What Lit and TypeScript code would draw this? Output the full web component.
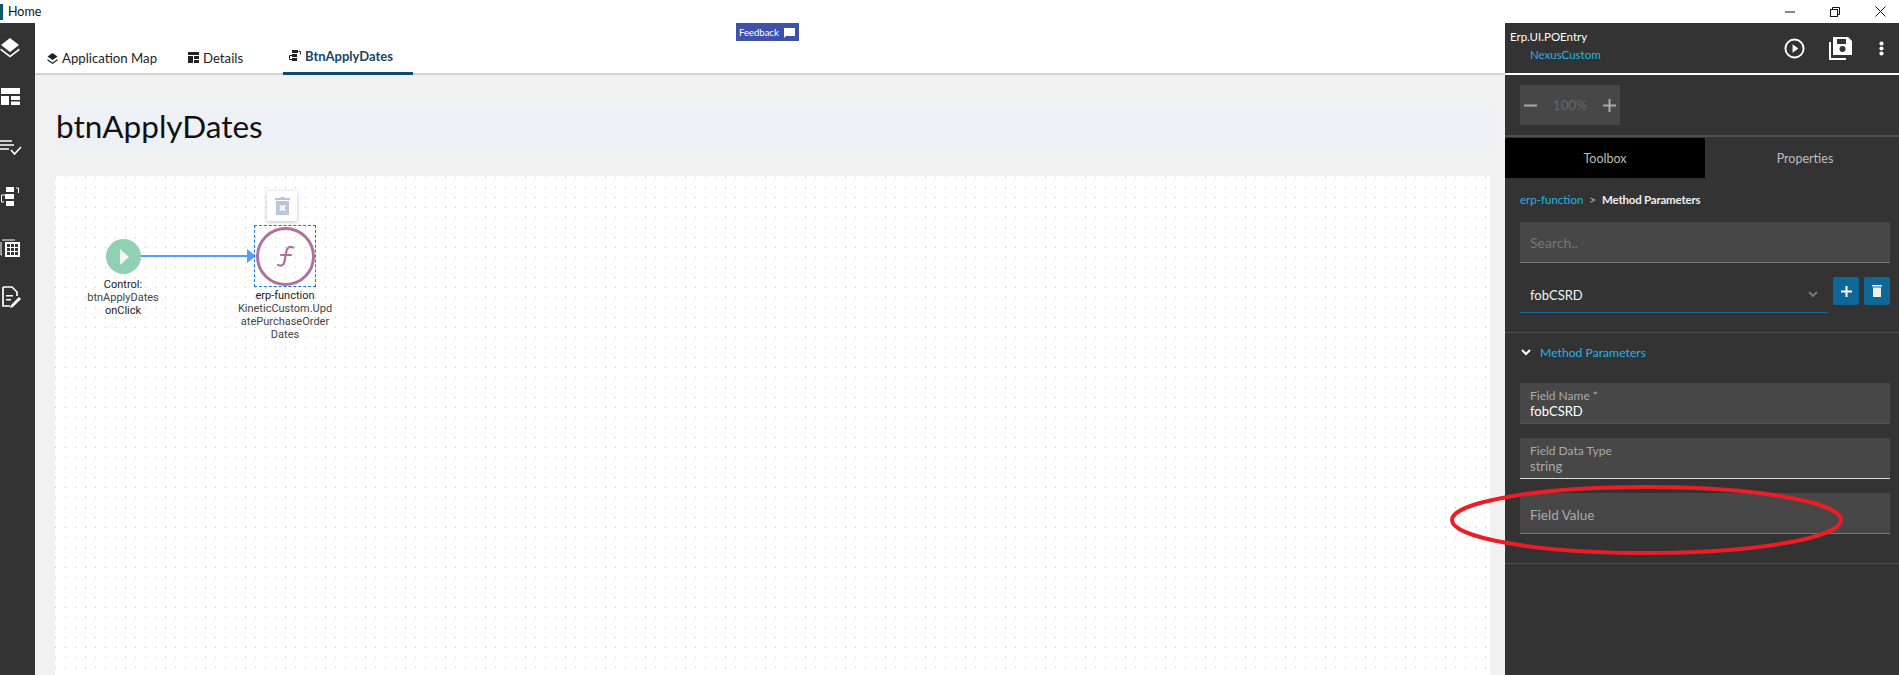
import { LitElement, html, css } from "lit";
import { customElement } from "lit/decorators.js";

@customElement("app-root")
export class AppRoot extends LitElement {
  static styles = css`
    :host { display: block; width: 1899px; height: 675px; overflow: hidden; position: relative; font-family: Lato, "Noto Sans", sans-serif; background: #fff; }
    * { box-sizing: border-box; }
    svg { display: block; }
    .titlebar { height: 23px; display: flex; align-items: center; background: #fff; position: relative; }
    .applogo { width: 3px; height: 16px; background: #0b5a73; }
    .home { margin-left: 5px; font-size: 12.500px; color: #111; }
    .winbtns { margin-left: auto; display: flex; align-items: center; gap: 35px; padding-right: 13px; }
    .body { display: flex; height: 652px; }
    .side { width: 35px; background: #333; display: flex; flex-direction: column; align-items: flex-start; padding-top: 12px; flex: none; }
    .side svg { margin-bottom: 26px; }
    .main { flex: 1; background: #f1f1f1; display: flex; flex-direction: column; min-width: 0; position: relative; }
    .tabs { height: 52px; background: #fff; border-bottom: 2px solid #d2d2d2; display: flex; align-items: flex-end; padding-left: 12px; position: relative; flex: none; }
    .tab { display: flex; align-items: center; gap: 4px; font-size: 13.200px; color: #222; height: 26px; padding-bottom: 5px; flex: none; }
    .tab.t1 { width: 141px; }
    .tab.t2 { width: 95px; }
    .tab.active { width: 130px; margin-bottom: -2px; height: 28px; padding-left: 6px; padding-bottom: 7px; border-bottom: 3px solid #0b4a6f; color: #1b4560; font-weight: 700; gap: 4px; font-size: 13px; }
    .feedback { position: absolute; left: 701px; top: 0; width: 63px; height: 18px; background: #3f51a8; color: #fff; font-size: 9.500px; display: flex; align-items: center; padding-left: 3px; gap: 5px; }
    .heading { margin: 30px 15px 0 20px; height: 48px; background: #edf1f5; font-size: 31.500px; color: #111; line-height: 42px; padding-left: 1px; flex: none; }
    .canvas { margin: 23px 15px 0 20px; flex: 1; background-color: #fff;
      background-image: radial-gradient(circle at 0.5px 0.5px, #c4c4c4 0.7px, transparent 0.8px);
      background-size: 10px 10px; background-position: 0 1px; position: relative; }
    .node-label { position: absolute; width: 110px; text-align: center; font-family: Roboto, sans-serif; font-size: 11px; line-height: 13px; color: #444; white-space: nowrap; }
    .node-label b { font-weight: 400; color: #222; }
    .start { position: absolute; left: 51px; top: 63px; width: 35px; height: 35px; border-radius: 50%; background: #91d1b3; }
    .start svg { margin: 9px 0 0 13px; }
    .wire { position: absolute; left: 86px; top: 79px; width: 108px; height: 2px; background: #52a0f8; }
    .arrow { position: absolute; left: 192px; top: 73px; width: 0; height: 0; border-left: 9px solid #52a0f8; border-top: 7px solid transparent; border-bottom: 7px solid transparent; }
    .sel { position: absolute; left: 199px; top: 49px; width: 62px; height: 62px; border: 1px dashed #1a7ad0; }
    .fn { position: absolute; left: 1px; top: 1px; width: 59px; height: 59px; border-radius: 50%; border: 3px solid #b16f9b; display: flex; align-items: center; justify-content: center; color: #b16f9b; }
    .del { position: absolute; left: 212px; top: 15px; width: 30px; height: 30px; background: #fff; border-radius: 2px; box-shadow: 0 1px 4px rgba(60,70,90,.35); display: flex; align-items: center; justify-content: center; }
    .panel { width: 394px; background: #333; flex: none; display: flex; flex-direction: column; color: #fff; overflow: hidden; }
    .phead { height: 50px; display: flex; padding: 0 0 0 5px; flex: none; position: relative; }
    .pnames { font-size: 11.500px; line-height: 18px; padding-top: 5px; }
    .pnames div + div { color: #1fb4e8; padding-left: 20px; }
    .picons { margin-left: auto; display: flex; align-items: center; padding-right: 15px; }
    .picons .sv { margin: 0 27px 0 24px; }
    .gapline { height: 2px; background: #fff; flex: none; }
    .zoomrow { height: 62px; padding: 10px 15px 0; border-bottom: 2px solid #4d4d4d; flex: none; }
    .zoombox { width: 100px; height: 40px; background: #474747; display: flex; align-items: center; justify-content: space-between; padding: 0 4px; color: #666; font-size: 13.500px; }
    .ptabs { display: flex; height: 40px; margin-top: 1px; flex: none; }
    .ptab { width: 200px; flex: none; display: flex; align-items: center; justify-content: center; font-size: 12.500px; color: #bdbdbd; }
    .ptab.on { background: #000; border-radius: 2px 2px 0 0; }
    .crumb { padding: 15px 15px 0; font-size: 11.500px; height: 44px; flex: none; display: flex; gap: 6px; }
    .crumb .l { color: #1fb4e8; }
    .crumb .s { color: #bbb; }
    .crumb .c { font-weight: 700; color: #eee; letter-spacing: -0.2px; }
    .search { margin: 0 9px 0 15px; height: 41px; background: #474747; border-bottom: 1px solid #7a7a7a; padding: 0 10px; display: flex; align-items: center; font-size: 14px; color: #777; flex: none; }
    .selrow { display: flex; margin: 14px 9px 0 15px; height: 36px; flex: none; align-items: flex-start; gap: 5px; }
    .select { width: 308px; height: 36px; border-bottom: 1px solid #0e6a99; display: flex; align-items: center; padding: 0 10px; font-size: 13px; color: #f2f2f2; justify-content: space-between; }
    .bt { width: 26px; height: 28px; border-radius: 2px; background: #0f6797; display: flex; align-items: center; justify-content: center; }
    .divider { height: 1px; background: #4d4d4d; flex: none; }
    .secthead { height: 50px; display: flex; align-items: center; padding: 0 0 12px 16px; gap: 9px; font-size: 12.200px; color: #1fb4e8; flex: none; }
    .fields { padding: 0 9px 0 15px; display: flex; flex-direction: column; gap: 14px; height: 180px; flex: none; }
    .field { height: 41px; background: #474747; border-bottom: 1px solid #777; padding: 3px 10px 0; flex: none; }
    .field.a { border-bottom-color: #0e6a99; }
    .field.b { border-bottom-color: #dcdcdc; }
    .field .lb { font-size: 12px; color: #aaa; line-height: 15px; padding-top: 2px; }
    .field .v { font-size: 13px; line-height: 17px; color: #fff; }
    .field.b .v { color: #aaa; }
    .field.ph { display: flex; align-items: center; font-size: 13.500px; color: #aaa; padding-top: 3px; }
    .ellipse { position: absolute; left: 1440px; top: 470px; pointer-events: none; }
  `;

  render() {
    return html`
      <div class="titlebar">
        <div class="applogo"></div>
        <div class="home">Home</div>
        <div class="winbtns">
          <svg width="10" height="2" viewBox="0 0 10 2"><rect width="10" height="1" y="0.5" fill="#111"/></svg>
          <svg width="10" height="10" viewBox="0 0 10 10" fill="none" stroke="#111"><rect x=".5" y="2.5" width="7" height="7"/><path d="M2.500 2.500V.5h7v7H7.500"/></svg>
          <svg width="11" height="11" viewBox="0 0 11 11" stroke="#111" fill="none"><path d="M.5.5l10 10M10.500.5l-10 10"/></svg>
        </div>
      </div>
      <div class="body">
        <div class="side">
          <svg width="20" height="24" viewBox="0 0 20 24" fill="#fff"><path d="M10 3l9 7-9 7-9-7z"/><path d="M1 13.500l9 7 9-7 .8 1.500L10 22.600.2 15z"/></svg>
          <svg width="20" height="24" viewBox="0 0 20 24" fill="#fff"><path d="M1 3h19v6H1zM1 11h8v9H1zM11 11h9v4h-9zM11 16.500h9V20h-9z"/></svg>
          <svg width="22" height="24" viewBox="0 0 22 24" fill="none" stroke="#fff" stroke-width="1.700"><path d="M0 6h12M0 10h14M0 14h9M11 15l3.500 4L21 12"/></svg>
          <svg width="20" height="24" viewBox="0 0 20 24"><path fill="#fff" d="M6 2h8v5H6zM5 9h9v5H5zM6 16h8v5H6z"/><path fill="none" stroke="#fff" d="M16 3h2.500v5M6 10H1.500v7H4"/></svg>
          <svg width="20" height="24" viewBox="0 0 20 24"><path fill="none" stroke="#fff" d="M1 7V20h1M2 5h13"/><path fill="#fff" d="M5 7h15v15H5z"/><path fill="#333" d="M7 9h3v3H7zM11 9h3v3h-3zM15 9h3v3h-3zM7 13h3v3H7zM11 13h3v3h-3zM15 13h3v3h-3zM7 17h3v3H7zM11 17h3v3h-3zM15 17h3v3h-3z"/></svg>
          <svg width="22" height="24" viewBox="0 0 22 24"><path fill="none" stroke="#fff" stroke-width="1.700" d="M3 2h9l5 5v4M10 21H3V2"/><path fill="#fff" d="M6 10h7v1.500H6zM6 14h5v1.500H6z"/><path fill="#fff" d="M19 12l2 2-8 8-3 1 1-3z"/></svg>
        </div>
        <div class="main">
          <div class="tabs">
            <div class="tab t1">
              <svg width="11" height="12" viewBox="0 0 11 12" fill="#222"><path d="M5.500 1l5 3.500-5 3.500-5-3.500z"/><path d="M.5 7l5 3.500 5-3.500v1.500L5.500 12 .5 8.500z"/></svg>
              Application Map
            </div>
            <div class="tab t2">
              <svg width="11" height="11" viewBox="0 0 11 11" fill="#222"><path d="M0 0h11v3H0zM0 4h5v7H0zM6 4h5v3H6zM6 8h5v3H6z"/></svg>
              Details
            </div>
            <div class="tab active">
              <svg width="12" height="12" viewBox="0 0 12 12" fill="#222"><path d="M3 0h6v3H3zM3 4h5v3H3zM3 8h5v3H3z"/><path fill="none" stroke="#222" d="M9.500 1.500h2v3M3 5.500H.5v4H3"/></svg>
              BtnApplyDates
            </div>
            <div class="feedback">Feedback
              <svg width="11" height="11" viewBox="0 0 11 11" fill="#fff"><path d="M0 1h11v8H2l-2 2z"/></svg>
            </div>
          </div>
          <div class="heading">btnApplyDates</div>
          <div class="canvas">
            <div class="start"><svg width="11" height="18" viewBox="0 0 11 18"><path d="M1 1l9 8-9 8z" fill="#f2f7f3"/></svg></div>
            <div class="wire"></div>
            <div class="arrow"></div>
            <div class="del">
              <svg width="15" height="18" viewBox="0 0 15 18"><path fill="#b9c6d9" d="M0 1h5l1-1h3l1 1h5v2H0zM1 4h13v14H1z"/><path stroke="#fff" stroke-width="2" d="M5 8.500l5 5M10 8.500l-5 5"/></svg>
            </div>
            <div class="sel"><div class="fn">
              <svg width="20" height="25" viewBox="0 0 20 24" fill="none" stroke="#b16f9b" stroke-width="2.200" stroke-linecap="round"><path d="M17 3c-3-1.500-5.500 0-6.500 3l-2 11c-.7 4-3.500 5-6.500 3.500M5 10.500h10"/></svg>
            </div></div>
            <div class="node-label" style="left:13px;top:102px"><b>Control:</b><br>btnApplyDates<br><b>onClick</b></div>
            <div class="node-label" style="left:175px;top:113px"><b>erp-function</b><br>KineticCustom.Upd<br>atePurchaseOrder<br>Dates</div>
          </div>
        </div>
        <div class="panel">
          <div class="phead">
            <div class="pnames"><div>Erp.UI.POEntry</div><div>NexusCustom</div></div>
            <div class="picons">
              <svg width="21" height="21" viewBox="0 0 22 22" fill="none" stroke="#fff" stroke-width="2"><circle cx="11" cy="11" r="9.500"/><path fill="#fff" stroke="none" d="M9 6.500l6 4.500-6 4.500z"/></svg>
              <svg class="sv" width="23" height="23" viewBox="0 0 23 23"><path fill="#fff" d="M4 0h15l4 4v14H4z"/><path fill="none" stroke="#fff" stroke-width="2" d="M1 5v17h16"/><path fill="#333" d="M8 2h9v5H8z"/><circle cx="13.500" cy="12" r="3" fill="#333"/></svg>
              <svg width="5" height="17" viewBox="0 0 6 18" fill="#fff"><circle cx="3" cy="3" r="2.500"/><circle cx="3" cy="9" r="2.500"/><circle cx="3" cy="15" r="2.500"/></svg>
            </div>
          </div>
          <div class="gapline"></div>
          <div class="zoomrow">
            <div class="zoombox">
              <svg width="13" height="13" viewBox="0 0 13 13"><rect y="5.500" width="13" height="2" fill="#aaa"/></svg>
              <span>100%</span>
              <svg width="13" height="13" viewBox="0 0 13 13"><path fill="#aaa" d="M0 5.500h13v2H0zM5.500 0h2v13h-2z"/></svg>
            </div>
          </div>
          <div class="ptabs"><div class="ptab on">Toolbox</div><div class="ptab">Properties</div></div>
          <div class="crumb"><span class="l">erp-function</span><span class="s">&gt;</span><span class="c">Method Parameters</span></div>
          <div class="search">Search..</div>
          <div class="selrow">
            <div class="select">fobCSRD
              <svg width="10" height="7" viewBox="0 0 10 7" fill="none" stroke="#777" stroke-width="2"><path d="M1 1l4 4 4-4"/></svg>
            </div>
            <div class="bt"><svg width="11" height="11" viewBox="0 0 11 11"><path fill="#fff" d="M0 4.500h11v2H0zM4.500 0h2v11h-2z"/></svg></div>
            <div class="bt"><svg width="10" height="12" viewBox="0 0 10 12" fill="#f0f0f0"><path d="M0 0h10v1.500H0zM1 2.500h8V12H1z"/></svg></div>
          </div>
          <div class="divider" style="margin-top:19px"></div>
          <div class="secthead">
            <svg width="10" height="7" viewBox="0 0 10 7" fill="none" stroke="#fff" stroke-width="2"><path d="M1 1l4 4 4-4"/></svg>
            Method Parameters
          </div>
          <div class="fields">
            <div class="field a"><div class="lb">Field Name *</div><div class="v">fobCSRD</div></div>
            <div class="field b"><div class="lb">Field Data Type</div><div class="v">string</div></div>
            <div class="field ph">Field Value</div>
          </div>
          <div class="divider"></div>
        </div>
      </div>
      <svg class="ellipse" width="430" height="100" viewBox="1440 470 430 100" fill="none"><ellipse cx="1646.500" cy="520" rx="194.500" ry="33" stroke="#ee1c25" stroke-width="4"/></svg>
    `;
  }
}
